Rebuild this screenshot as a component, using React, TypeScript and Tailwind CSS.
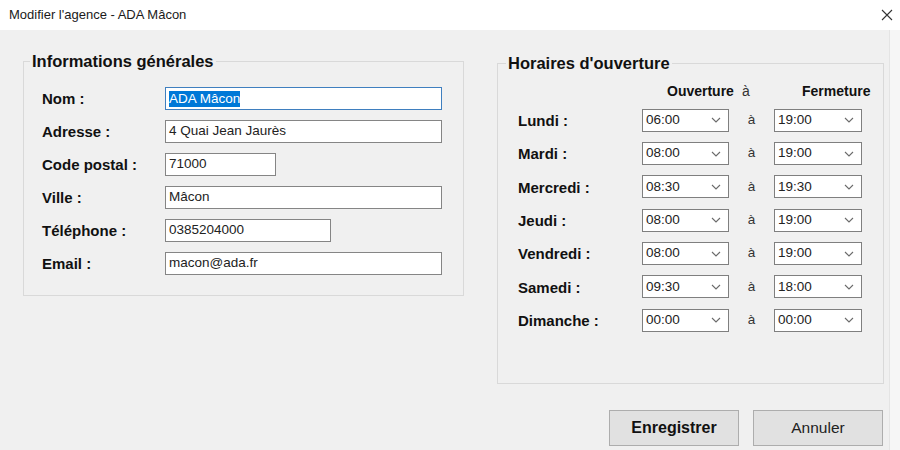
const font = "font-['Liberation_Sans',Arial,sans-serif]";

const fields = [
  { label: "Nom :", value: "ADA Mâcon", width: "w-[277px]", selected: true },
  { label: "Adresse :", value: "4 Quai Jean Jaurès", width: "w-[277px]" },
  { label: "Code postal :", value: "71000", width: "w-[111px]" },
  { label: "Ville :", value: "Mâcon", width: "w-[277px]" },
  { label: "Téléphone :", value: "0385204000", width: "w-[166px]" },
  { label: "Email :", value: "macon@ada.fr", width: "w-[277px]" },
];

const hours = [
  { day: "Lundi :", open: "06:00", close: "19:00" },
  { day: "Mardi :", open: "08:00", close: "19:00" },
  { day: "Mercredi :", open: "08:30", close: "19:30" },
  { day: "Jeudi :", open: "08:00", close: "19:00" },
  { day: "Vendredi :", open: "08:00", close: "19:00" },
  { day: "Samedi :", open: "09:30", close: "18:00" },
  { day: "Dimanche :", open: "00:00", close: "00:00" },
];

const Chevron = () => (
  <svg width="10" height="6" viewBox="0 0 10 6" className="shrink-0">
    <polyline points="1,1 5,5 9,1" fill="none" stroke="#6b6b6b" strokeWidth="1.1" />
  </svg>
);

const Combo = ({ value, width }: { value: string; width: string }) => (
  <div
    className={`${width} h-[23px] bg-white border border-[#7f7f7f] flex items-center justify-between pl-[3px] pr-[7px] text-[13.5px] text-[#222]`}
  >
    <span>{value}</span>
    <Chevron />
  </div>
);

const App = () => {
  return (
    <div className={`w-[900px] h-[450px] flex flex-col bg-[#f0f0f0] text-[#111] overflow-hidden ${font}`}>
      {/* title bar */}
      <div className="h-[30px] shrink-0 bg-white flex items-center justify-between pl-[9px] pr-[7px]">
        <span className="text-[13px] text-[#1a1a1a]">Modifier l'agence - ADA Mâcon</span>
        <svg width="12" height="12" viewBox="0 0 12 12">
          <path d="M1 1 L11 11 M11 1 L1 11" stroke="#333" strokeWidth="1.1" />
        </svg>
      </div>

      <div className="flex-1 flex">
        <div className="w-[889px] flex flex-col">
          <div className="flex items-start gap-[33px] pl-[23px] pt-[21px]">
            {/* ── INFORMATIONS GÉNÉRALES ───────────────────── */}
            <fieldset className="w-[441px] border border-[#d9d9d9] pl-[18px] pr-[21px] pt-[16px] pb-[20px]">
              <legend className="-ml-[12px] px-[2px] text-[16.5px] font-bold leading-[20px]">
                Informations générales
              </legend>
              <div className="flex flex-col gap-[10px]">
                {fields.map((f) => (
                  <div key={f.label} className="flex items-center h-[23px]">
                    <span className="w-[123px] text-[15px] font-bold pt-[1px]">{f.label}</span>
                    <div
                      className={`${f.width} h-[23px] bg-white border flex items-center px-[3px] text-[13.5px] ${
                        f.selected ? "border-[#3f7fbf]" : "border-[#858585] text-[#222]"
                      }`}
                    >
                      {f.selected ? (
                        <span className="bg-[#0078d7] text-white leading-[16px]">{f.value}</span>
                      ) : (
                        f.value
                      )}
                    </div>
                  </div>
                ))}
              </div>
            </fieldset>

            {/* ── HORAIRES ─────────────────────────────────── */}
            <fieldset className="w-[387px] border border-[#d9d9d9] pl-[20px] pt-[8px] pb-[52px] mt-[2px]">
              <legend className="-ml-[12px] px-[2px] text-[16.5px] font-bold leading-[20px]">
                Horaires d'ouverture
              </legend>
              <div className="grid grid-cols-[124px_87px_45px_88px] h-[18px] items-center text-[14px] font-bold whitespace-nowrap">
                <span />
                <span className="pl-[25px]">Ouverture</span>
                <span className="pl-[13px] font-normal text-[#333]">à</span>
                <span className="pl-[28px]">Fermeture</span>
              </div>
              <div className="flex flex-col gap-[10.33px] mt-[9px]">
                {hours.map((h) => (
                  <div key={h.day} className="grid grid-cols-[124px_87px_45px_88px] items-center h-[23px]">
                    <span className="text-[15px] font-bold pt-[2px]">{h.day}</span>
                    <Combo value={h.open} width="w-[87px]" />
                    <span className="text-center text-[13.5px] text-[#333]">à</span>
                    <Combo value={h.close} width="w-[88px]" />
                  </div>
                ))}
              </div>
            </fieldset>
          </div>

          <div className="flex justify-end gap-[14px] pr-[6px] mt-[26px]">
            <button className="w-[130px] h-[36px] bg-[#e1e1e1] border border-[#adadad] text-[16px] font-bold text-[#111]">
              Enregistrer
            </button>
            <button className="w-[130px] h-[36px] bg-[#e1e1e1] border border-[#adadad] text-[15.5px] text-[#222]">
              Annuler
            </button>
          </div>
        </div>
        <div className="flex-1 bg-[#f6f6f6] border-l border-[#e4e4e4]" />
      </div>
    </div>
  );
};

export default App;
